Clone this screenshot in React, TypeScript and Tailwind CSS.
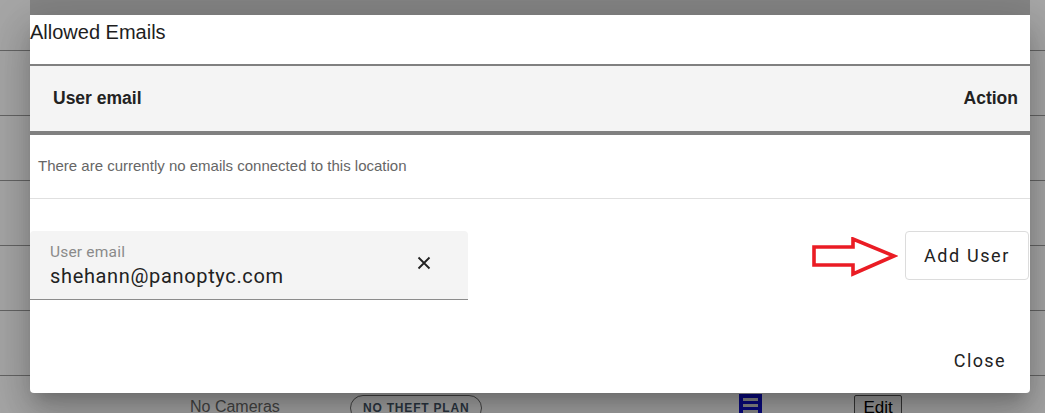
import React from 'react';

const rows = [0, 1, 2, 3, 4];

const App: React.FC = () => {
  return (
    <div className="relative w-[1045px] h-[413px] overflow-hidden bg-white font-['Liberation_Sans',Arial,sans-serif]">
      {/* page behind the dialog */}
      <div className="flex flex-col pt-[50px]">
        {rows.map((r) => (
          <div key={r} className="h-[65px] border-t border-[#9a9a9a]" />
        ))}
        <div className="h-[65px] border-t border-[#9a9a9a] flex items-start pt-[21px]">
          <span className="ml-[190px] w-[160px] text-[16px] text-[#6a6a6a] leading-[20px]">No Cameras</span>
          <span className="h-[26px] px-[12px] -mt-[2px] rounded-full border border-[#6a6a6a] text-[12px] font-bold tracking-[0.8px] text-[#445566] flex items-center">
            NO THEFT PLAN
          </span>
          <span className="ml-[257px] -mt-[3px] w-[23px] h-[22px] bg-[#1010c8] flex flex-col justify-center gap-[3px] px-[4px]">
            <span className="h-[3px] bg-[#d8d8d8]" />
            <span className="h-[3px] bg-[#d8d8d8]" />
            <span className="h-[3px] bg-[#d8d8d8]" />
          </span>
          <span className="ml-[92px] -mt-[2px] h-[26px] px-[8px] border border-[#555] rounded-[2px] bg-[#efefef] text-[17px] leading-[24px] text-black">
            Edit
          </span>
        </div>
      </div>

      {/* backdrop */}
      <div className="absolute inset-0 bg-[rgba(0,0,0,0.35)]" />

      {/* dialog */}
      <div className="absolute left-[30px] top-0 w-[1000px] flex flex-col">
        <div className="h-[15px] bg-[rgba(0,0,0,0.2)]" />
        <div className="bg-white rounded-b-[4px] shadow-[0_11px_15px_-7px_rgba(0,0,0,0.2),0_24px_38px_3px_rgba(0,0,0,0.14),0_9px_46px_8px_rgba(0,0,0,0.12)] flex flex-col">
          <div className="h-[49px] pt-[5px] text-[20px] leading-[24px] text-[#1e1e1e]">Allowed Emails</div>

          <div className="h-[71px] border-t-[2px] border-b-[4px] border-[#808080] bg-[#f4f4f4] flex items-center justify-between pl-[23px] pr-[12px]">
            <span className="text-[17.5px] font-bold text-[#222]">User email</span>
            <span className="text-[17.5px] font-bold text-[#222]">Action</span>
          </div>

          <div className="h-[64px] border-b border-[#e0e0e0] flex items-center pl-[8px] pb-[1px]">
            <span className="text-[15px] text-[#666]">There are currently no emails connected to this location</span>
          </div>

          <div className="flex items-start mt-[32px] h-[69px]">
            <div className="w-[438px] h-[69px] bg-[#f4f4f4] rounded-t-[4px] border-b border-[#8c8c8c] flex items-center pl-[20px] pr-[36px] font-['Roboto',Arial,sans-serif]">
              <div className="flex-1 flex flex-col pt-[1px]">
                <span className="text-[15.5px] leading-[18px] text-[#8a8a8a] tracking-[0.2px]">User email</span>
                <span className="text-[20px] leading-[24px] mt-[3px] text-[#222] tracking-[0.65px]">shehann@panoptyc.com</span>
              </div>
              <svg width="14" height="14" viewBox="0 0 14 14" className="mt-[-4px] mr-[1px]">
                <path d="M1.5 1.5 L12.5 12.5 M12.5 1.5 L1.5 12.5" stroke="#222" strokeWidth="1.8" fill="none" />
              </svg>
            </div>

            <div className="flex-1 flex justify-end items-start">
              <svg width="86" height="42" viewBox="0 0 86 42" className="mt-[6px] mr-[7px]">
                <path
                  d="M2 10 L41 10 L41 2 L82 19 L41 37 L41 28 L2 28 Z"
                  fill="none"
                  stroke="#ea1c24"
                  strokeWidth="3.6"
                  strokeLinejoin="miter"
                />
              </svg>
              <button className="w-[124px] h-[49px] mr-[1px] border border-[#dcdcdc] rounded-[4px] bg-white text-[18px] tracking-[1.6px] text-[#222] font-['Roboto',Arial,sans-serif]">
                Add User
              </button>
            </div>
          </div>

          <div className="flex justify-end pt-[40px] pb-[13px] pr-[12px]">
            <button className="h-[40px] px-[12px] text-[18px] tracking-[1.4px] text-[#222] font-['Roboto',Arial,sans-serif]">
              Close
            </button>
          </div>
        </div>
      </div>
    </div>
  );
};

export default App;
